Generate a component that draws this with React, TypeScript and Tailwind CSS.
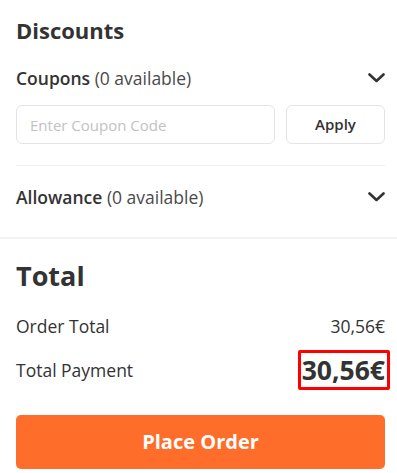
import React from "react"

function Chevron() {
    return (
        <svg width="17" height="10" viewBox="0 0 17 10" fill="none" className="shrink-0">
            <polyline points="1.5,1.5 8.5,8 15.5,1.5" stroke="#333333" strokeWidth="2.6" strokeLinecap="round" strokeLinejoin="round" />
        </svg>
    )
}

function App() {
    return (
        <div className="w-[397px] h-[473px] bg-white text-[#333333] overflow-hidden" style={{ fontFamily: '"Open Sans", sans-serif' }}>
            <div className="pl-4 pr-3 pt-[14px]">
                <h2 className="text-[22px] leading-[33px] font-bold">Discounts</h2>

                <div className="mt-[20px] flex items-center justify-between h-[22px]">
                    <p className="text-[17.5px] leading-[22px]">
                        <span className="font-semibold">Coupons</span>{" "}
                        <span className="text-[#4a4a4a]">(0 available)</span>
                    </p>
                    <Chevron />
                </div>

                <div className="mt-[16px] flex gap-[11px]">
                    <input
                        placeholder="Enter Coupon Code"
                        className="flex-1 min-w-0 h-[39px] border border-[#e4e4e4] rounded-[6px] px-[13px] text-[15px] placeholder:text-[#c2c2c2] outline-none"
                    />
                    <button className="w-[99px] h-[39px] border border-[#e4e4e4] rounded-[6px] text-[15px] font-semibold text-[#333333]">
                        Apply
                    </button>
                </div>

                <div className="mt-[21px] h-px bg-[#efefef]" />

                <div className="mt-[20px] flex items-center justify-between h-[22px]">
                    <p className="text-[17.5px] leading-[22px]">
                        <span className="font-semibold">Allowance</span>{" "}
                        <span className="text-[#4a4a4a]">(0 available)</span>
                    </p>
                    <Chevron />
                </div>
            </div>

            <div className="mt-[29px] h-[2px] bg-[#f2f2f2]" />

            <div className="pl-4 pr-3">
                <h2 className="mt-[18px] text-[27px] leading-[38px] font-bold">Total</h2>

                <div className="mt-[20px] flex items-center justify-between text-[17.5px] leading-[22px]">
                    <span>Order Total</span>
                    <span>30,56€</span>
                </div>

                <div className="mt-[14px] flex items-center justify-between h-[38px]">
                    <span className="text-[17.5px] leading-[22px]">Total Payment</span>
                    <span className="relative text-[26.5px] leading-[34px] font-bold">
                        30,56€
                        <span className="absolute -top-[3px] -bottom-[3px] -left-[4px] -right-[5px] border-[3px] border-[#ff0000] rounded-[2px]" />
                    </span>
                </div>

                <button className="mt-[26px] w-full h-[54px] rounded-[5px] bg-[#ff6d2b] text-white text-[20px] font-bold">
                    Place Order
                </button>
            </div>
        </div>
    )
}

export default App
